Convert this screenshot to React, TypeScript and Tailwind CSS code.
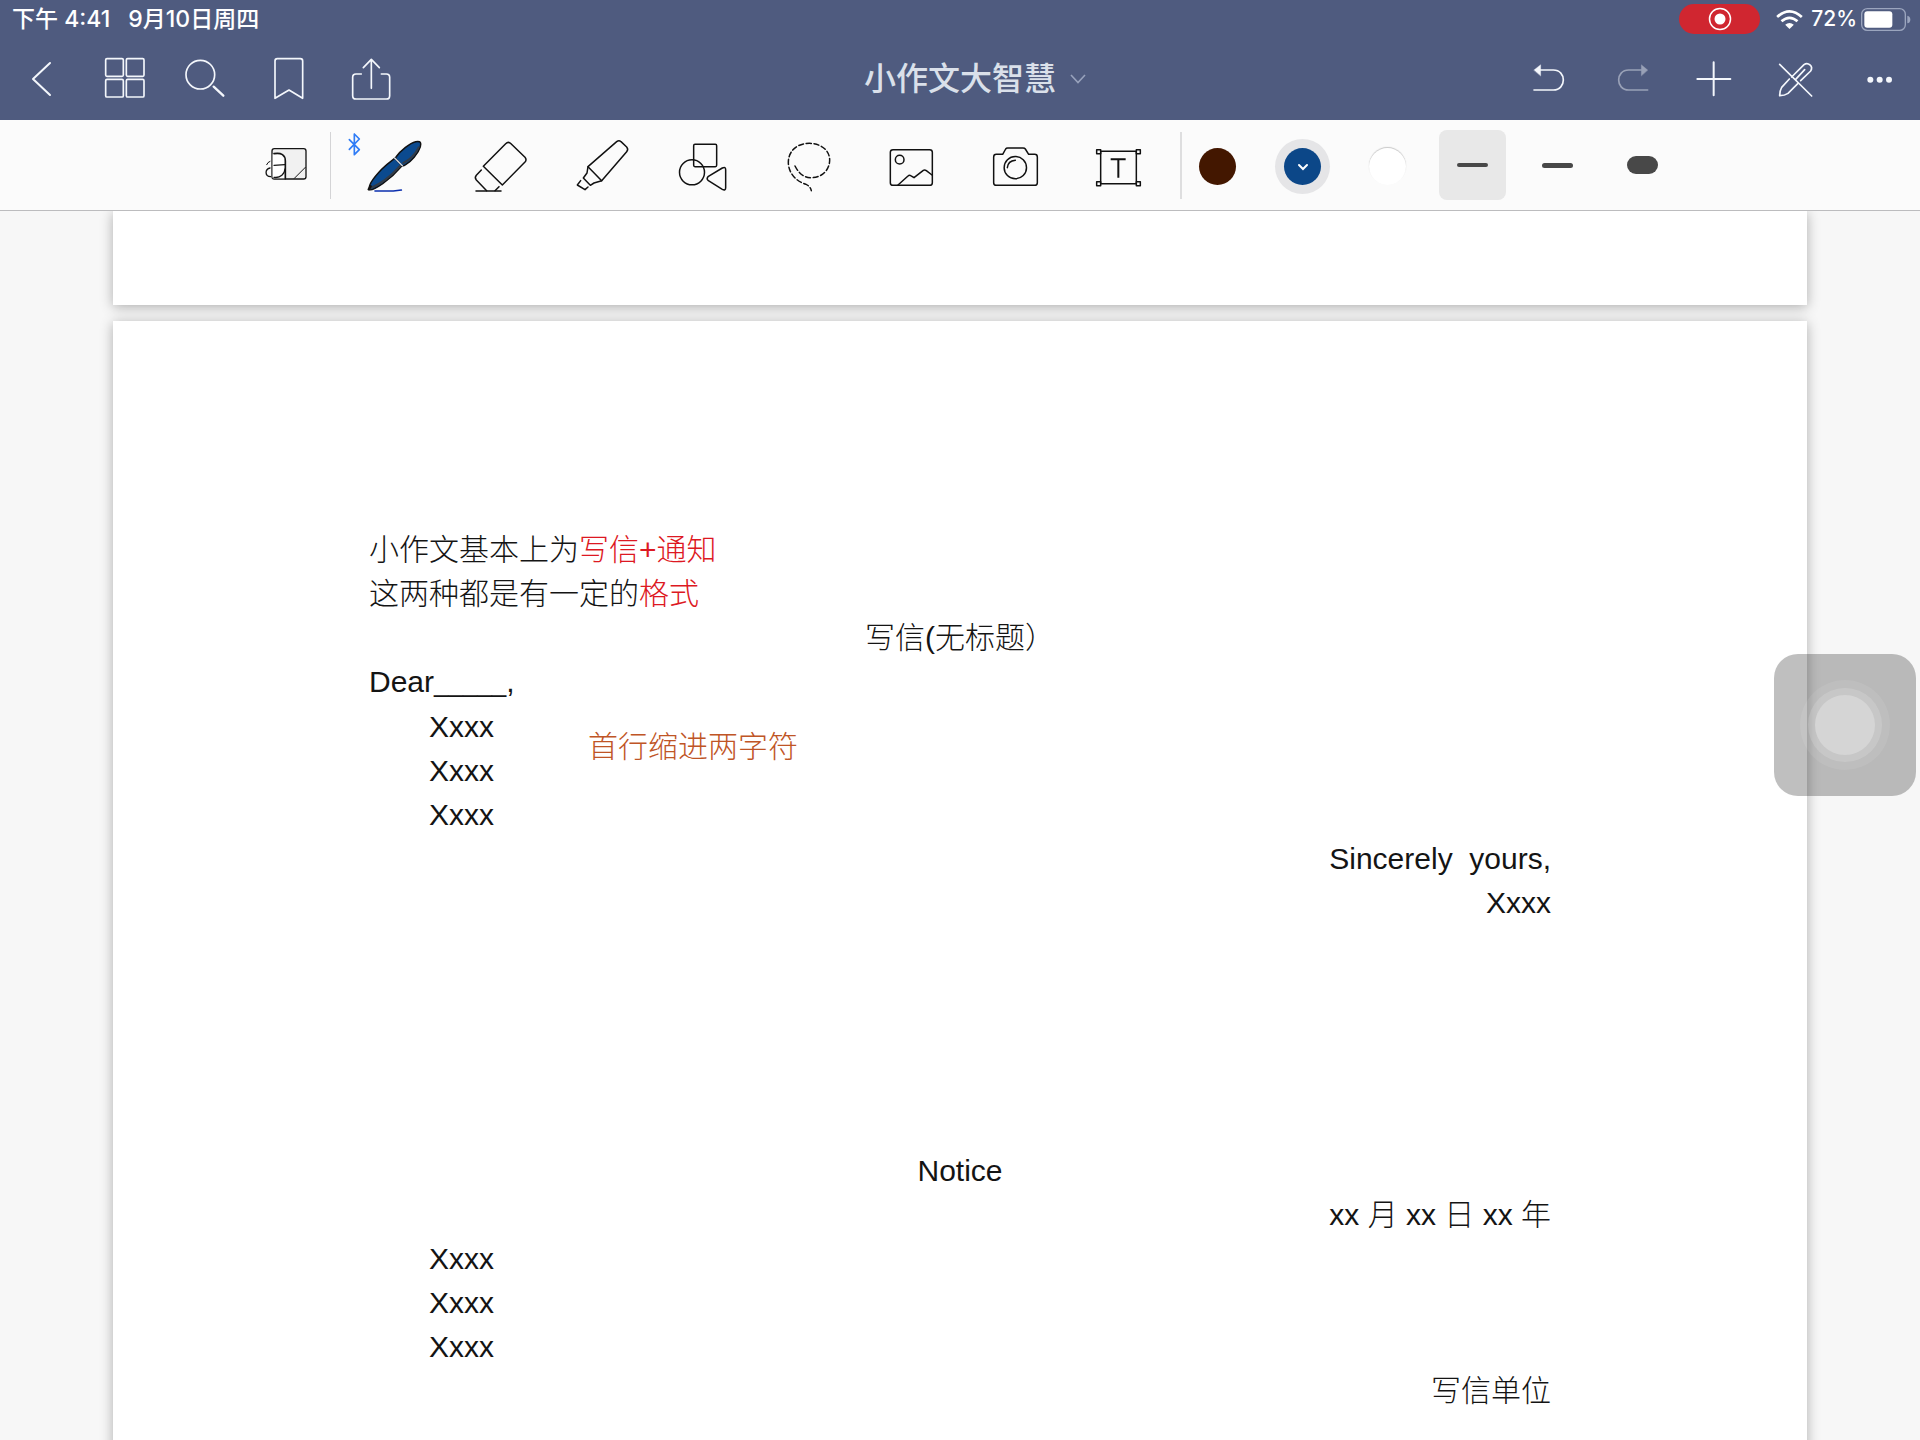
import type { ReactNode } from 'react';

const navLeft = [
  {
    label: '返回',
    viewBox: '33 147 183 180',
    drawing: <path d="M150 189 L99 237 L150 285" strokeWidth="6" />,
  },
  {
    label: '缩略图',
    viewBox: '282 147 183 180',
    drawing: (
      <>
        <rect x="317" y="176" width="53" height="53" rx="4" />
        <rect x="379" y="176" width="53" height="53" rx="4" />
        <rect x="317" y="238" width="53" height="53" rx="4" />
        <rect x="379" y="238" width="53" height="53" rx="4" />
      </>
    ),
  },
  {
    label: '搜索',
    viewBox: '531 147 183 180',
    drawing: (
      <>
        <circle cx="601" cy="224" r="43" />
        <path d="M641 260 L670 287" strokeWidth="7" />
      </>
    ),
  },
  {
    label: '书签',
    viewBox: '780 147 183 180',
    drawing: <path d="M825 295 V183 Q825 176 832 176 H901 Q908 176 908 183 V295 L867 270 Z" />,
  },
  {
    label: '分享',
    viewBox: '1029 147 183 180',
    drawing: (
      <>
        <path d="M1084 222 H1068 Q1058 222 1058 232 V287 Q1058 297 1068 297 H1159 Q1169 297 1169 287 V232 Q1169 222 1159 222 H1144" />
        <path d="M1114 265 V179 M1090 203 L1114 178 L1138 203" />
      </>
    ),
  },
];

const navRight = [
  {
    label: '撤销',
    viewBox: '108 147 183 180',
    drawing: (
      <>
        <path d="M162 270 H220 C260 270 260 210 220 210 H178" />
        <path d="M162 210 L182 194 V227 Z" fill="currentColor" strokeWidth="1" />
      </>
    ),
  },
  {
    label: '重做',
    viewBox: '357 147 183 180',
    drawing: (
      <g opacity="0.45">
        <path d="M503 270 H446 C406 270 406 210 446 210 H484" />
        <path d="M503 210 L484 194 V227 Z" fill="currentColor" strokeWidth="1" />
      </g>
    ),
  },
  {
    label: '添加',
    viewBox: '606 147 183 180',
    drawing: <path d="M701 187 V286 M652 237 H751" strokeWidth="6" />,
  },
  {
    label: '只读模式',
    viewBox: '855 147 183 180',
    drawing: (
      <>
        <path d="M899 193 L995 288" />
        <path d="M935 231 L972 194 C984 185 1001 199 992 213 L962 242" />
        <path d="M928 237 L905 262 Q899 272 899 287 Q914 287 924 280 L954 250" />
        <path d="M947 238 L974 209" />
      </>
    ),
  },
  {
    label: '更多',
    viewBox: '1104 147 183 180',
    drawing: (
      <g fill="currentColor" stroke="none">
        <circle cx="1171" cy="239" r="9" />
        <circle cx="1199" cy="239" r="9" />
        <circle cx="1227" cy="239" r="9" />
      </g>
    ),
  },
];

const tools = [
  {
    label: '钢笔',
    viewBox: '351 42 219 216',
    drawing: (
      <>
        <path d="M343 57 V119 L358 104 L328 74 M343 57 L358 72 L328 103" stroke="#2f7cf6" strokeWidth="5" />
        <path
          d="M388 224 C384 212 405 184 425 163 C438 150 452 139 464 130 L486 152 C471 170 450 190 428 206 C412 217 396 228 388 224 Z"
          fill="#0b4a8f"
        />
        <path
          d="M468 126 C482 106 510 84 527 80 C543 77 544 84 541 95 C534 117 513 140 497 149 C489 154 487 153 482 147 L468 132 Q465 129 468 126 Z"
          fill="#0b4a8f"
        />
        <path d="M392 219 C425 206 456 180 480 153 M490 144 C508 135 527 115 536 97" stroke="#333b46" strokeWidth="6" />
        <path d="M464 129 L487 152" stroke="#d5dbe6" strokeWidth="4" />
        <path d="M386 223 L392 214" strokeWidth="7" />
        <path d="M405 228 H460 L484 225" stroke="#0b2fae" strokeWidth="5" />
      </>
    ),
  },
  {
    label: '橡皮擦',
    viewBox: '660 42 219 216',
    drawing: (
      <>
        <path d="M730 154 L797 86 Q805 78 813 86 L855 127 Q861 134 855 141 L787 210 Z" />
        <path d="M724 165 L709 181 Q703 188 709 195 L740 227 M765 227 L777 215" />
        <path d="M708 228 H783" />
      </>
    ),
  },
  {
    label: '荧光笔',
    viewBox: '969 42 219 216',
    drawing: (
      <>
        <path d="M1044 155 L1130 80 Q1137 74 1143 80 L1160 96 Q1166 103 1160 110 L1085 197 Z" />
        <path d="M1044 155 L1041 174 L1030 189 L1051 211 L1062 204 L1085 197" />
        <path d="M1022 197 L1012 210 L1035 224 L1044 216" />
      </>
    ),
  },
  {
    label: '形状',
    viewBox: '-12 42 219 216',
    drawing: (
      <>
        <rect x="71" y="88" width="69" height="67" rx="4" />
        <circle cx="66" cy="172" r="37.5" />
        <path d="M114 185 L157 159 Q167 154 167 164 V218 Q167 228 157 223 L114 196 Q109 191 114 185 Z" />
      </>
    ),
  },
  {
    label: '套索',
    viewBox: '297 42 219 216',
    drawing: (
      <path
        d="M375 153 C387 176 402 188 424 188 C457 188 479 164 479 135 C479 104 450 85 418 85 C380 85 355 109 355 142 C355 174 378 199 408 208 Q421 214 424 227"
        strokeDasharray="15 8"
      />
    ),
  },
  {
    label: '图片',
    viewBox: '606 42 219 216',
    drawing: (
      <>
        <rect x="661" y="104" width="126" height="107" rx="8" />
        <circle cx="689" cy="134" r="13" />
        <path d="M684 210 L714 183 Q718 179 722 182 L732 188 L760 166 Q764 163 769 167 L786 180" />
      </>
    ),
  },
  {
    label: '相机',
    viewBox: '915 42 219 216',
    drawing: (
      <>
        <path d="M971 126 Q971 118 979 118 H998 L1007 102 Q1009 99 1013 99 H1059 Q1064 99 1066 102 L1076 118 H1094 Q1102 118 1102 126 V203 Q1102 211 1094 211 H979 Q971 211 971 203 Z" />
        <circle cx="1036" cy="158" r="33.5" />
        <path d="M1012 158 Q1014 138 1036 136" />
      </>
    ),
  },
  {
    label: '文本',
    viewBox: '1224 42 219 216',
    drawing: (
      <>
        <rect x="1292" y="109" width="107" height="97" />
        <path d="M1322 133 H1367 M1345 133 V188" strokeWidth="6" strokeLinecap="butt" />
        <g fill="#fbfbfb">
          <rect x="1280" y="104" width="12" height="12" />
          <rect x="1399" y="104" width="12" height="12" />
          <rect x="1280" y="200" width="12" height="12" />
          <rect x="1399" y="200" width="12" height="12" />
        </g>
      </>
    ),
  },
];

const strokes = [
  { label: '细', bar: 'h-1', active: true },
  { label: '中', bar: 'h-[5px]', active: false },
  { label: '粗', bar: 'h-[18px]', active: false },
];

function NavButton({ label, viewBox, children }: { label: string; viewBox: string; children: ReactNode }) {
  return (
    <button aria-label={label} className="flex h-full w-[83px] items-center justify-center text-[#f4f7fc]">
      <svg
        viewBox={viewBox}
        className="h-[60px] w-[61px]"
        fill="none"
        stroke="currentColor"
        strokeWidth="5"
        strokeLinecap="round"
        strokeLinejoin="round"
      >
        {children}
      </svg>
    </button>
  );
}

function StatusBar() {
  return (
    <div className="flex h-[38px] items-center justify-between pr-[9px] pl-3 leading-[30px]">
      <div className="flex gap-[18px] text-[23px]">
        <span>下午 4:41</span>
        <span>9月10日周四</span>
      </div>
      <div className="flex items-center text-[21px]">
        <span className="mr-4 flex h-[30px] w-[81px] items-center justify-center rounded-full bg-[#d02630]">
          <svg viewBox="0 0 24 24" className="size-6" fill="none" stroke="white" strokeWidth="1.5">
            <circle cx="12" cy="12" r="10.5" />
            <circle cx="12" cy="12" r="5.5" fill="white" stroke="none" />
          </svg>
        </span>
        <svg viewBox="890 24 80 60" className="mr-2 h-5 w-[27px]" fill="none" stroke="white" strokeWidth="8">
          <path d="M893 48 Q930 14 967 48" />
          <path d="M906 61 Q930 40 954 61" />
          <path d="M917 71 Q930 61 943 71 L930 84 Z" fill="white" stroke="none" />
        </svg>
        <span className="mr-1">72%</span>
        <svg viewBox="0 0 150 69" className="h-[23px] w-[50px]">
          <rect x="2" y="2" width="131" height="65" rx="17" fill="none" stroke="#9ba5be" strokeWidth="4" />
          <rect x="10" y="10" width="84" height="49" rx="9" fill="white" />
          <path d="M139 23 Q148 25 148 35 Q148 44 139 46 Z" fill="#9ba5be" />
        </svg>
      </div>
    </div>
  );
}

function Toolbar() {
  return (
    <div
      role="toolbar"
      className="relative z-10 flex h-[91px] shrink-0 items-center justify-center border-b border-[#bcbcbe] bg-[#fbfbfb]"
    >
      <button aria-label="放大书写" className="mr-1 flex w-[82px] justify-center">
        <svg
          viewBox="12 42 246 216"
          className="h-[72px] w-[82px]"
          fill="none"
          stroke="#151515"
          strokeWidth="4"
          strokeLinecap="round"
        >
          <rect x="96" y="101" width="102" height="91" rx="7" fill="#f1f1f1" />
          <path d="M98 118 Q136 106 136 136 V190 H98 Z" fill="white" stroke="none" />
          <path d="M102 116 C124 112 136 120 136 138 V191" strokeWidth="5" />
          <path d="M134 149 L102 151 M90 159 C74 163 74 184 92 185 M102 187 C122 190 134 176 135 162" />
          <path d="M80 149 Q83 141 90 139 M163 190 L196 157" strokeWidth="3" />
        </svg>
      </button>
      <div className="mr-[11px] h-[67px] w-px bg-[#d4d4d6]" />

      {tools.map((tool) => (
        <button key={tool.label} aria-label={tool.label} className="flex w-[103px] justify-center">
          <svg
            viewBox={tool.viewBox}
            className="h-[72px] w-[73px] overflow-visible"
            fill="none"
            stroke="#111"
            strokeWidth="4.5"
            strokeLinecap="round"
            strokeLinejoin="round"
          >
            {tool.drawing}
          </svg>
        </button>
      ))}

      <div className="mr-[2px] ml-[14px] h-[67px] w-[2px] bg-[#dededf]" />
      <div className="flex items-center gap-[18px]">
        <button aria-label="棕色" className="flex h-[70px] w-[67px] items-center justify-center pt-[3px]">
          <span className="size-[37px] rounded-full bg-[#431700]" />
        </button>
        <button aria-label="蓝色" className="flex h-[70px] w-[67px] items-center justify-center pt-[3px]">
          <span className="flex size-[55px] items-center justify-center rounded-full bg-[#e5e5e7]">
            <span className="flex size-[37px] items-center justify-center rounded-full bg-[#0c4788]">
              <svg viewBox="0 0 12 8" className="h-2 w-3" fill="none" stroke="white" strokeWidth="2" strokeLinecap="round">
                <path d="M2 2 L6 6 L10 2" />
              </svg>
            </span>
          </span>
        </button>
        <button aria-label="白色" className="flex h-[70px] w-[67px] items-center justify-center pt-[3px]">
          <span className="size-[37px] rounded-full bg-white shadow-[0_-1px_1px_#c8c8c8]" />
        </button>
        {strokes.map((stroke) => (
          <button
            key={stroke.label}
            aria-label={stroke.label}
            className={`flex h-[70px] w-[67px] items-center justify-center rounded-lg ${stroke.active ? 'bg-[#e8e8e8]' : ''}`}
          >
            <span className={`w-[31px] rounded-full bg-[#484848] ${stroke.bar}`} />
          </button>
        ))}
      </div>
    </div>
  );
}

function Letter() {
  return (
    <article className="mx-[113px] mt-4 min-h-full bg-white px-64 pt-[207px] font-['Liberation_Sans','Noto_Sans_CJK_SC',sans-serif] text-[30px] leading-[44px] font-light text-[#141414] shadow-[0_2px_12px_rgba(0,0,0,0.3)]">
      <p>
        小作文基本上为<span className="text-[#dd1822]">写信+通知</span>
      </p>
      <p>
        这两种都是有一定的<span className="text-[#dd1822]">格式</span>
      </p>
      <h2 className="text-center">写信(无标题）</h2>
      <p>
        Dear<span className="text-[26px]">_____</span>,
      </p>
      <div className="flex items-start pl-15">
        <div>
          <p>Xxxx</p>
          <p>Xxxx</p>
          <p>Xxxx</p>
        </div>
        <p className="mt-5 ml-[94px] text-[#bf5526]">首行缩进两字符</p>
      </div>
      <div className="text-right">
        <p>Sincerely&nbsp; yours,</p>
        <p>Xxxx</p>
      </div>

      <h2 className="mt-[224px] text-center">Notice</h2>
      <p className="text-right">xx 月 xx 日 xx 年</p>
      <div className="pl-15">
        <p>Xxxx</p>
        <p>Xxxx</p>
        <p>Xxxx</p>
      </div>
      <p className="text-right">写信单位</p>
    </article>
  );
}

export default function App() {
  return (
    <div className="relative flex h-screen flex-col overflow-hidden bg-[#f7f7f7] font-['Inter','Noto_Sans_CJK_SC',sans-serif]">
      <header className="shrink-0 bg-[#4f5b7f] font-medium text-white">
        <StatusBar />
        <nav className="flex h-[82px] items-center justify-between">
          <div className="flex h-full">
            {navLeft.map((item) => (
              <NavButton key={item.label} label={item.label} viewBox={item.viewBox}>
                {item.drawing}
              </NavButton>
            ))}
          </div>
          <button className="flex items-center gap-[14px] pl-[30px] text-[32px] leading-10 text-[#dae0ea]">
            小作文大智慧
            <svg viewBox="0 0 16 10" className="h-[10px] w-4" fill="none" stroke="#98a2bc" strokeWidth="1.6">
              <path d="M1 1 L8 8.5 L15 1" />
            </svg>
          </button>
          <div className="flex h-full">
            {navRight.map((item) => (
              <NavButton key={item.label} label={item.label} viewBox={item.viewBox}>
                {item.drawing}
              </NavButton>
            ))}
          </div>
        </nav>
      </header>

      <Toolbar />

      <main className="min-h-0 flex-1 overflow-hidden">
        <div className="mx-[113px] h-[94px] bg-white shadow-[0_2px_12px_rgba(0,0,0,0.3)]" />
        <Letter />
      </main>

      <button
        aria-label="辅助触控"
        className="absolute top-[654px] right-1 z-20 flex size-[142px] items-center justify-center rounded-3xl bg-black/25"
      >
        <span className="flex size-[90px] items-center justify-center rounded-full bg-white/8">
          <span className="flex size-[74px] items-center justify-center rounded-full bg-white/15">
            <span className="size-[60px] rounded-full bg-[#d5d5d5]" />
          </span>
        </span>
      </button>
    </div>
  );
}
